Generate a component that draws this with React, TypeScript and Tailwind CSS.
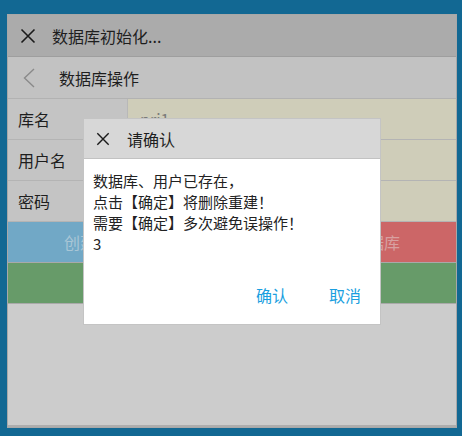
import React from "react";

const font = { fontFamily: '"Noto Sans CJK SC", "Noto Sans", sans-serif' };

const CloseIcon = ({ className }: { className?: string }) => (
  <svg className={className} viewBox="0 0 16 16" fill="none" stroke="currentColor" strokeWidth={1.6}>
    <path d="M1.5 1.5 L14.5 14.5 M14.5 1.5 L1.5 14.5" />
  </svg>
);

const BackIcon = ({ className }: { className?: string }) => (
  <svg className={className} viewBox="0 0 12 20" fill="none" stroke="currentColor" strokeWidth={1.4}>
    <path d="M11 1 L1.5 10 L11 19" />
  </svg>
);

// values of the 2nd and 3rd rows sit under the dialog
const rows = [
  { label: "库名", value: "pri1" },
  { label: "用户名", value: "" },
  { label: "密码", value: "" },
];

const App = (): JSX.Element => {
  return (
    <div className="relative w-[462px] h-[436px] bg-[#126893] pt-[14px] pl-[7px]" style={font}>
      <div className="w-[450px] h-[414px] border border-[#a8a8a8] bg-[#cccccc] flex flex-col">
        <div className="h-[42px] shrink-0 bg-[#ababab] border-b border-[#9e9e9e] flex items-center">
          <CloseIcon className="w-[16px] h-[16px] ml-[12px] text-[#1a1a1a]" />
          <span className="ml-[16px] text-[16px] text-[#1e1e1e]">数据库初始化...</span>
        </div>
        <div className="h-[42px] shrink-0 bg-[#c2c2c2] border-b border-[#b2b2b2] flex items-center">
          <BackIcon className="w-[12px] h-[20px] ml-[15px] text-[#8a8a8a]" />
          <span className="ml-[24px] text-[16px] text-[#1e1e1e]">数据库操作</span>
        </div>
        {rows.map((row) => (
          <div key={row.label} className="h-[41px] shrink-0 flex border-b border-[#b4b4b4]">
            <div className="w-[120px] bg-[#c4c4c4] border-r border-[#b8b8b8] flex items-center pl-[10px] text-[16px] text-[#1e1e1e]">
              {row.label}
            </div>
            <div className="flex-1 bg-[#cfcdb9] flex items-center pl-[12px] text-[16px] text-[#7a7a7a]">
              {row.value}
            </div>
          </div>
        ))}
        <div className="h-[41px] shrink-0 flex border-b border-[#a9a9a9]">
          <div className="flex-1 bg-[#71a8c6] flex items-center justify-center text-[16px] text-[#a9c6d6]">
            创建用户数据库
          </div>
          <div className="flex-1 bg-[#cc6667] flex items-center justify-center text-[16px] text-[#d8a0a0]">
            删除用户数据库
          </div>
        </div>
        <div className="h-[41px] shrink-0 bg-[#679b69] border-b border-[#a9a9a9]" />
        <div className="flex-1 border-b-2 border-[#adadad]" />
      </div>

      <div className="absolute left-[83px] top-[118px] w-[298px] h-[207px] bg-white border border-[#c4c4c4] flex flex-col">
        <div className="h-[40px] shrink-0 bg-[#d7d7d7] border-b border-[#c2c2c2] flex items-center">
          <CloseIcon className="w-[14px] h-[14px] ml-[12px] text-[#1a1a1a]" />
          <span className="ml-[17px] text-[16px] text-[#1e1e1e]">请确认</span>
        </div>
        <div className="pt-[11px] pl-[9px] text-[15px] leading-[21px] text-[#222222]">
          <div>数据库、用户已存在，</div>
          <div>点击【确定】将删除重建！</div>
          <div>需要【确定】多次避免误操作！</div>
          <div>3</div>
        </div>
        <div className="mt-auto mb-[18px] flex justify-end gap-[41px] pr-[19px] text-[16px] leading-[22px] text-[#1a9fe0]">
          <span>确认</span>
          <span>取消</span>
        </div>
      </div>
    </div>
  );
};

export default App;
